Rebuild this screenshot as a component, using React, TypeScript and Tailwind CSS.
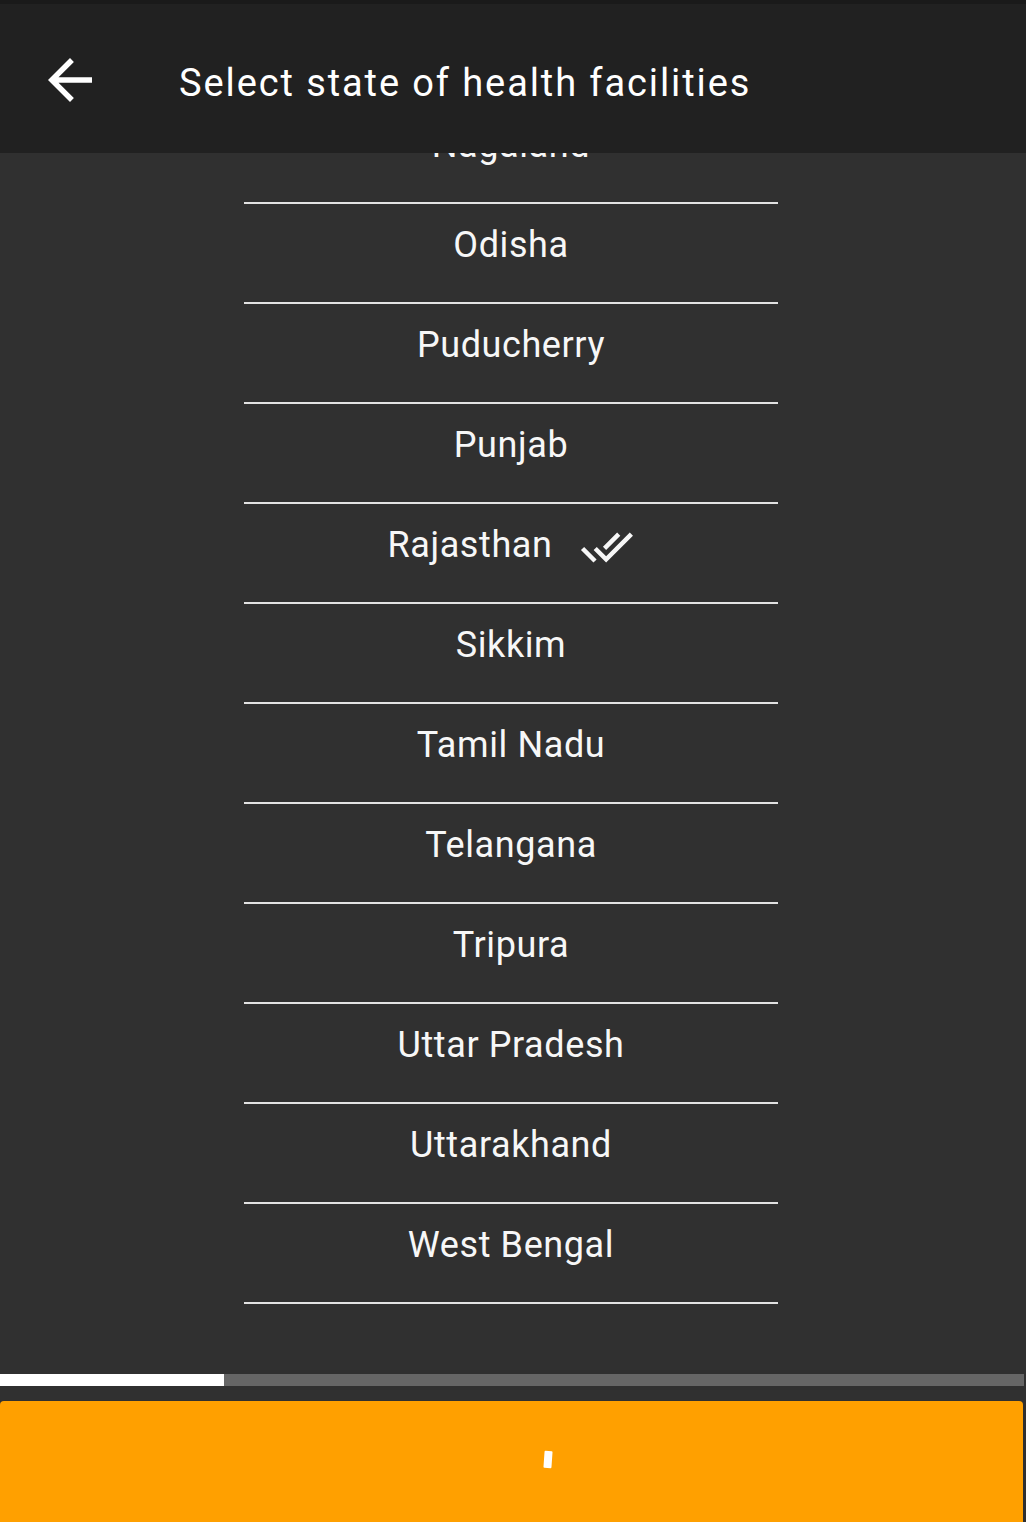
const states = [
  "Nagaland",
  "Odisha",
  "Puducherry",
  "Punjab",
  "Rajasthan",
  "Sikkim",
  "Tamil Nadu",
  "Telangana",
  "Tripura",
  "Uttar Pradesh",
  "Uttarakhand",
  "West Bengal",
];

const selected = "Rajasthan";

function DoneAll() {
  return (
    <svg viewBox="0.4 4 23.3 15.2" className="w-[56px] h-[34px] ml-[26px] mt-[2px]" fill="currentColor">
      <path d="M18 7l-1.41-1.41-6.34 6.34 1.41 1.41L18 7zm4.24-1.41L11.66 16.17 7.48 12l-1.41 1.41L11.66 19l12-12-1.42-1.41zM.41 13.41L6 19l1.41-1.41L1.83 12 .41 13.41z" />
    </svg>
  );
}

export default function App() {
  return (
    <div
      className="w-[1026px] h-[1522px] flex flex-col bg-[#303030] text-white overflow-hidden"
      style={{ fontFamily: "Roboto, 'Noto Sans', sans-serif" }}
    >
      {/* status strip */}
      <div className="h-1 bg-[#1a1a1a]" />

      {/* toolbar */}
      <div className="h-[149px] flex items-start bg-[#212121] relative z-10">
        <svg viewBox="0 0 24 24" className="w-[66px] h-[66px] ml-[37px] mt-[43px] shrink-0" fill="currentColor">
          <path d="M20 11H7.83l5.59-5.59L12 4l-8 8 8 8 1.41-1.41L7.83 13H20v-2z" />
        </svg>
        <div className="ml-[76px] mt-[60px] text-[38px] leading-none tracking-[1.9px] text-white whitespace-nowrap">
          Select state of health facilities
        </div>
      </div>

      {/* list */}
      <div className="flex-1 overflow-hidden">
        <ul className="w-[534px] -mt-[49px] ml-[244px]">
          {states.map((s) => (
            <li
              key={s}
              className="h-[100px] border-b-2 border-[#e2e2e2] flex justify-center items-start pt-[17px]"
            >
              <div className="h-[48px] flex items-center text-[36px] tracking-[0.6px] text-[#f7f7f7]">
                <span>{s}</span>
                {s === selected && <DoneAll />}
              </div>
            </li>
          ))}
        </ul>
      </div>

      {/* progress */}
      <div className="h-[12px] w-[1024px] flex">
        <div className="w-[224px] bg-white" />
        <div className="flex-1 bg-[#666666]" />
      </div>

      <div className="h-[15px]" />

      {/* action button */}
      <div className="h-[121px] w-[1023px] bg-[#ffa000] rounded-t-[4px] flex items-center justify-center">
        <span className="block w-[8px] h-[17px] bg-white rounded-[1px] ml-[72px] -mt-[4px] rotate-[4deg]" />
      </div>
    </div>
  );
}
